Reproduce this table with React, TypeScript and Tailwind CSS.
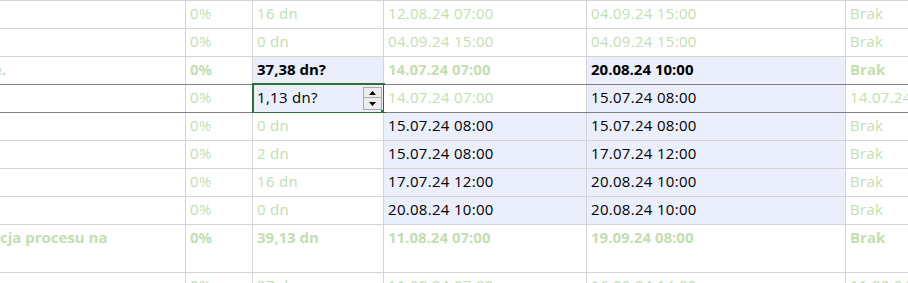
import React from 'react';

type Cell = {
  text: string;
  bold?: boolean;
  dark?: boolean;
  blue?: boolean;
  edit?: boolean;
  shift?: string;
};

type Row = {
  cells: Cell[];
  tall?: boolean;
  darkBottom?: boolean;
};

const g = (text: string, bold = false): Cell => ({ text, bold });
const k = (text: string, bold = false): Cell => ({ text, bold, dark: true, blue: true });

const rows: Row[] = [
  { cells: [g(''), g('0%'), g('16 dn'), g('12.08.24 07:00'), g('04.09.24 15:00'), g('Brak')] },
  { cells: [g(''), g('0%'), g('0 dn'), g('04.09.24 15:00'), g('04.09.24 15:00'), g('Brak')] },
  {
    darkBottom: true,
    cells: [
      { text: 'e.', bold: true, shift: '-ml-[11px]' },
      g('0%', true),
      k('37,38 dn?', true),
      g('14.07.24 07:00', true),
      k('20.08.24 10:00', true),
      g('Brak', true),
    ],
  },
  {
    darkBottom: true,
    cells: [g(''), g('0%'), { text: '1,13 dn?', dark: true, blue: true, edit: true }, g('14.07.24 07:00'), k('15.07.24 08:00'), g('14.07.24 07:00')],
  },
  { cells: [g(''), g('0%'), g('0 dn'), k('15.07.24 08:00'), k('15.07.24 08:00'), g('Brak')] },
  { cells: [g(''), g('0%'), g('2 dn'), k('15.07.24 08:00'), k('17.07.24 12:00'), g('Brak')] },
  { cells: [g(''), g('0%'), g('16 dn'), k('17.07.24 12:00'), k('20.08.24 10:00'), g('Brak')] },
  { cells: [g(''), g('0%'), g('0 dn'), k('20.08.24 10:00'), k('20.08.24 10:00'), g('Brak')] },
  {
    tall: true,
    cells: [
      { text: 'cja procesu na', bold: true, shift: '-ml-[4px]' },
      g('0%', true),
      g('39,13 dn', true),
      g('11.08.24 07:00', true),
      g('19.09.24 08:00', true),
      g('Brak', true),
    ],
  },
  { cells: [g(''), g('0%'), g('37 dn'), g('11.08.24 07:00'), g('16.09.24 14:00'), g('11.09.24 07:00')] },
];

const Spinner = () => (
  <div className="absolute right-[1px] top-[2px] flex flex-col">
    <div className="w-[19px] h-[11px] bg-[#ececec] border border-[#a9a9a9] flex items-center justify-center">
      <svg width="7" height="4" viewBox="0 0 7 4">
        <path d="M3.5 0 L7 4 L0 4 Z" fill="#000" />
      </svg>
    </div>
    <div className="w-[19px] h-[12px] bg-[#ececec] border border-[#a9a9a9] border-t-0 flex items-center justify-center">
      <svg width="7" height="4" viewBox="0 0 7 4">
        <path d="M0 0 L7 0 L3.5 4 Z" fill="#000" />
      </svg>
    </div>
  </div>
);

export default function App() {
  return (
    <div
      className="w-[908px] h-[283px] overflow-hidden bg-white text-[15px]"
      style={{ fontFamily: '"Open Sans", "Noto Sans", sans-serif' }}
    >
      <div className="border-t border-[#d4d4d4]">
        {rows.map((row, i) => (
          <div
            key={i}
            className={`grid grid-cols-[186px_67px_131px_203px_259px_1fr] border-b ${
              row.tall ? 'h-[48px]' : 'h-[28px]'
            } ${row.darkBottom ? 'border-[#808080]' : 'border-[#d4d4d4]'}`}
          >
            {row.cells.map((c, j) => (
              <div
                key={j}
                className={`relative px-1 pt-[2px] leading-5 whitespace-nowrap ${
                  c.edit ? '' : 'overflow-hidden'
                } ${j < 5 ? 'border-r border-[#d4d4d4]' : ''} ${c.blue ? 'bg-[#ebeffc]' : 'bg-white'} ${
                  c.dark ? 'text-black' : 'text-[#c5ddb2]'
                } ${c.bold ? 'font-bold tracking-[0px]' : 'font-normal tracking-[0.3px]'}`}
              >
                <span className={`block ${c.shift ?? ''}`}>{c.text}</span>
                {c.edit && (
                  <>
                    <div className="absolute -left-[1px] -top-[2px] -right-[2px] -bottom-[2px] border-2 border-[#2f6f33] pointer-events-none" />
                    <Spinner />
                    <div className="absolute -right-[3px] -bottom-[3px] w-[5px] h-[5px] bg-[#2f6f33]" />
                  </>
                )}
              </div>
            ))}
          </div>
        ))}
      </div>
    </div>
  );
}
